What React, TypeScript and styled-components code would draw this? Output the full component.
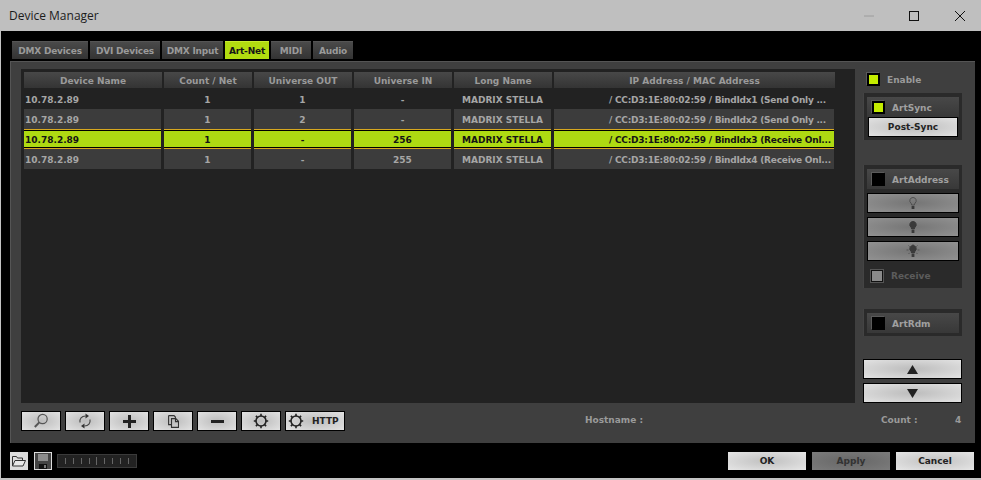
import styled, { createGlobalStyle } from "styled-components";

const GlobalStyle = createGlobalStyle`
  html, body {
    margin: 0;
    padding: 0;
    background: #000;
  }
  * {
    box-sizing: border-box;
  }
`;

const UI_FONT = `"DejaVu Sans", "Liberation Sans", sans-serif`;

const columns = [
  { title: "Device Name", width: 138 },
  { title: "Count / Net", width: 88 },
  { title: "Universe OUT", width: 98 },
  { title: "Universe IN", width: 98 },
  { title: "Long Name", width: 98 },
  { title: "IP Address / MAC Address", width: 281 },
];

const rows = [
  { out: "1", uin: "-", bind: "BindIdx1 (Send Only ..." },
  { out: "2", uin: "-", bind: "BindIdx2 (Send Only ..." },
  { out: "-", uin: "256", bind: "BindIdx3 (Receive Onl..." },
  { out: "-", uin: "255", bind: "BindIdx4 (Receive Onl..." },
];

const tabs = [
  { label: "DMX Devices", width: 76 },
  { label: "DVI Devices", width: 70 },
  { label: "DMX Input", width: 61 },
  { label: "Art-Net", width: 44, active: true },
  { label: "MIDI", width: 40 },
  { label: "Audio", width: 40 },
];

const App = () => {
  return (
    <Window>
      <GlobalStyle />
      <TitleBar>
        <span>Device Manager</span>
        <svg width="101" height="12" viewBox="0 0 101 12">
          <path d="M0 6h10" stroke="#9c9c9c" fill="none" />
          <rect x="45.5" y="1.5" width="9" height="9" stroke="#111" fill="none" />
          <path d="M91 1l10 10M101 1L91 11" stroke="#111" fill="none" />
        </svg>
      </TitleBar>
      <Body>
        <TabRow>
          {tabs.map((tab) => (
            <Tab key={tab.label} $active={tab.active} $width={tab.width}>
              {tab.label}
            </Tab>
          ))}
        </TabRow>
        <Panel>
          <MainArea>
            <Well>
              <HeaderRow>
                {columns.map((col) => (
                  <HeaderCell key={col.title}>{col.title}</HeaderCell>
                ))}
              </HeaderRow>
              {rows.map((row, i) => (
                <TableRow key={row.bind}>
                  <Cell $selected={i === 2} $shaded={i !== 0} $align="left">
                    10.78.2.89
                  </Cell>
                  <Cell $selected={i === 2} $shaded={i !== 0}>1</Cell>
                  <Cell $selected={i === 2} $shaded={i !== 0}>{row.out}</Cell>
                  <Cell $selected={i === 2} $shaded={i !== 0}>{row.uin}</Cell>
                  <Cell $selected={i === 2} $shaded={i !== 0}>MADRIX STELLA</Cell>
                  <Cell $selected={i === 2} $shaded={i !== 0} $align="address">
                    / CC:D3:1E:80:02:59 / {row.bind}
                  </Cell>
                </TableRow>
              ))}
            </Well>
            <SidePanel>
              <EnableRow>
                <CheckBox $on />
                <EnableLabel>Enable</EnableLabel>
              </EnableRow>
              <Group>
                <GroupHead>
                  <CheckBox $on />
                  <GroupLabel>ArtSync</GroupLabel>
                </GroupHead>
                <PostSync>Post-Sync</PostSync>
              </Group>
              <Group $gap={25}>
                <GroupHead>
                  <CheckBox />
                  <GroupLabel>ArtAddress</GroupLabel>
                </GroupHead>
                <BulbButton>
                  <BulbIcon variant="outline" />
                </BulbButton>
                <BulbButton>
                  <BulbIcon variant="solid" />
                </BulbButton>
                <BulbButton>
                  <BulbIcon variant="rays" />
                </BulbButton>
                <ReceiveRow>
                  <ReceiveBox />
                  <ReceiveLabel>Receive</ReceiveLabel>
                </ReceiveRow>
              </Group>
              <Group $gap={21}>
                <GroupHead>
                  <CheckBox />
                  <GroupLabel>ArtRdm</GroupLabel>
                </GroupHead>
              </Group>
              <ArrowStack>
                <ArrowButton>
                  <svg width="11" height="9" viewBox="0 0 11 9">
                    <path d="M5.5 0L11 9H0z" fill="#222" />
                  </svg>
                </ArrowButton>
                <ArrowButton>
                  <svg width="11" height="9" viewBox="0 0 11 9">
                    <path d="M0 0h11L5.5 9z" fill="#222" />
                  </svg>
                </ArrowButton>
              </ArrowStack>
            </SidePanel>
          </MainArea>
          <BottomBar>
            <ToolBar>
              <ToolButton>
                <svg width="16" height="16" viewBox="0 0 16 16" fill="none" stroke="#555" strokeWidth="1.2">
                  <circle cx="9.6" cy="6" r="4.6" />
                  <path d="M6.300 9.400L1.800 14" strokeWidth="2" />
                </svg>
              </ToolButton>
              <ToolButton>
                <svg width="14" height="16" viewBox="0 0 14 16" fill="none" stroke="#444" strokeWidth="1.1">
                  <path d="M2 9.500C1.400 6 3.500 3 7.500 3" />
                  <path d="M12 6.500C12.600 10 10.500 13 6.500 13" />
                  <path d="M7.500 .5l3.500 2.500-3.500 2.500z" fill="#333" stroke="none" />
                  <path d="M6.500 10.500L3 13l3.500 2.500z" fill="#333" stroke="none" />
                </svg>
              </ToolButton>
              <ToolButton>
                <svg width="13" height="13" viewBox="0 0 13 13">
                  <path d="M5 0h3v5h5v3H8v5H5V8H0V5h5z" fill="#222" />
                </svg>
              </ToolButton>
              <ToolButton>
                <svg width="11" height="13" viewBox="0 0 11 13" fill="none" stroke="#333" strokeWidth="1.1">
                  <path d="M.6.6h5.400l1.400 1.400v2" />
                  <path d="M.6.6v9h2.400" />
                  <path d="M3.500 3.600h4.300l2.700 2.700v6.100h-7z" />
                  <path d="M7.500 3.600v3h3" />
                </svg>
              </ToolButton>
              <ToolButton>
                <svg width="13" height="3" viewBox="0 0 13 3">
                  <rect width="13" height="3" fill="#222" />
                </svg>
              </ToolButton>
              <ToolButton>
                <GearIcon />
              </ToolButton>
              <ToolButton $wide>
                <GearIcon />
                <HttpLabel>HTTP</HttpLabel>
              </ToolButton>
            </ToolBar>
            <Hostname>Hostname :</Hostname>
            <CountLabel>Count :</CountLabel>
            <CountValue>4</CountValue>
          </BottomBar>
        </Panel>
        <Footer>
          <FileButton>
            <svg width="14" height="12" viewBox="0 0 14 12" fill="none" stroke="#333" strokeWidth="1">
              <path d="M.5 11V1.500h4l1 1.500h5v2" />
              <path d="M.5 11l2.500-5.500h10.500L11 11z" fill="#e8e8e8" />
            </svg>
          </FileButton>
          <FileButton>
            <svg width="16" height="16" viewBox="0 0 16 16">
              <rect width="16" height="16" fill="#444" />
              <rect x="3" y="1" width="10" height="7" fill="#8c8c8c" />
              <rect x="4" y="11" width="8" height="5" fill="#111" />
              <rect x="9" y="12" width="2" height="3" fill="#777" />
            </svg>
          </FileButton>
          <Slider>
            {Array.from({ length: 9 }).map((_, i) => (
              <Tick key={i} $tall={i === 4} />
            ))}
          </Slider>
          <DialogButtons>
            <DialogButton>OK</DialogButton>
            <DialogButton $disabled>Apply</DialogButton>
            <DialogButton>Cancel</DialogButton>
          </DialogButtons>
        </Footer>
      </Body>
    </Window>
  );
};

const GearIcon = () => (
  <svg width="16" height="16" viewBox="0 0 16 16" fill="none">
    <circle cx="8" cy="8" r="5" stroke="#222" strokeWidth="1.6" />
    <path
      d="M8 .8v2.400M8 12.800v2.400M.8 8h2.400M12.800 8h2.400M2.900 2.900l1.700 1.700M11.400 11.400l1.700 1.700M13.100 2.900l-1.700 1.700M4.600 11.400l-1.700 1.700"
      stroke="#222"
      strokeWidth="1.600"
    />
  </svg>
);

const BulbIcon = ({ variant }: { variant: "outline" | "solid" | "rays" }) => (
  <svg width="16" height="14" viewBox="0 0 16 14" fill="none">
    {variant === "rays" && (
      <path
        d="M8 0v1.500M3.500 1.500l1.200 1.200M12.500 1.500l-1.200 1.200M1.500 6h2M12.500 6h2M3.500 10l1.200-1.200M12.500 10l-1.200-1.200"
        stroke="#555"
        strokeWidth="1"
      />
    )}
    <path
      d="M8 1.500a3.200 3.200 0 0 0-2 5.700c.5.500.6 1 .6 1.800h2.800c0-.8.100-1.300.6-1.800a3.200 3.200 0 0 0-2-5.700z"
      fill={variant === "outline" ? "none" : "#3a3a3a"}
      stroke={variant === "outline" ? "#505050" : "#3a3a3a"}
    />
    <rect x="6.600" y="10" width="2.800" height="3" fill="#3a3a3a" />
  </svg>
);

const Window = styled.div`
  width: 981px;
  height: 480px;
  display: flex;
  flex-direction: column;
  overflow: hidden;
  background: #c4c4c4;
  font-family: ${UI_FONT};
  font-size: 9px;
  font-weight: 700;
`;

const TitleBar = styled.div`
  height: 31px;
  flex: none;
  display: flex;
  align-items: center;
  justify-content: space-between;
  padding: 0 16px 0 9px;
  background: #bfbfbf;
  color: #1c1c1c;
  font-family: "Open Sans", "Noto Sans", sans-serif;
  font-size: 12px;
  font-weight: 400;
`;

const Body = styled.div`
  height: 447px;
  flex: none;
  margin-left: 1px;
  background: #000;
  display: flex;
  flex-direction: column;
  padding: 10px 7px 0 9px;
`;

const TabRow = styled.div`
  display: flex;
  height: 18px;
  gap: 2px;
  padding-left: 2px;
  margin-bottom: 2px;
`;

const Tab = styled.div<{ $active?: boolean; $width: number }>`
  width: ${(p) => p.$width}px;
  display: flex;
  align-items: center;
  justify-content: center;
  padding-top: 1px;
  letter-spacing: -0.2px;
  color: ${(p) => (p.$active ? "#161616" : "#9a9a9a")};
  background: ${(p) =>
    p.$active ? "#b2dc10" : "linear-gradient(#4a4a4a, #333333)"};
  border-top: 1px solid ${(p) => (p.$active ? "#c8ec30" : "#555555")};
`;

const Panel = styled.div`
  height: 382px;
  width: 965px;
  background: #3f3f3f;
  border-top: 1px solid #555;
  border-left: 1px solid #555;
  padding: 7px 13px 0 10px;
  display: flex;
  flex-direction: column;
`;

const MainArea = styled.div`
  height: 334px;
  display: flex;
  gap: 8px;
`;

const Well = styled.div`
  width: 834px;
  background: #222222;
  padding: 3px 0 0 3px;
`;

const TableRow = styled.div`
  display: grid;
  grid-template-columns: 138px 88px 98px 98px 98px 281px;
  column-gap: 2px;
  height: 20px;
`;

const HeaderRow = styled(TableRow)`
  height: 17px;
`;

const HeaderCell = styled.div`
  height: 16px;
  padding-top: 1px;
  display: flex;
  align-items: center;
  justify-content: center;
  color: #9a9a9a;
  background: linear-gradient(#484848, #343434);
`;

const Cell = styled.div<{
  $selected?: boolean;
  $shaded?: boolean;
  $align?: "left" | "address";
}>`
  height: 20px;
  margin-right: 1px;
  padding-top: 1px;
  display: flex;
  align-items: center;
  justify-content: ${(p) => (p.$align ? "flex-start" : "center")};
  padding-left: ${(p) =>
    p.$align === "address" ? "55px" : p.$align === "left" ? "1px" : "0"};
  letter-spacing: ${(p) => (p.$align === "address" ? "-0.24px" : "0")};
  white-space: nowrap;
  color: ${(p) => (p.$selected ? "#141414" : "#a6a6a6")};
  background: ${(p) =>
    p.$selected ? "#aeda12" : p.$shaded ? "#3c3c3c" : "#222222"};
  ${(p) =>
    p.$selected
      ? "box-shadow: inset 0 1px 0 #d8a820, inset 0 2px 0 #000, inset 0 -1px 0 #d8a820, inset 0 -2px 0 #000;"
      : ""}
`;

const SidePanel = styled.div`
  width: 99px;
  display: flex;
  flex-direction: column;
`;

const EnableRow = styled.div`
  height: 13px;
  margin: 4px 0 7px;
  display: flex;
  align-items: center;
  padding-left: 4px;
  gap: 7px;
`;

const EnableLabel = styled.span`
  color: #9a9a9a;
`;

const CheckBox = styled.div<{ $on?: boolean }>`
  width: 13px;
  height: 13px;
  flex: none;
  background: ${(p) => (p.$on ? "#c4ec00" : "#000")};
  border: 2px solid #000;
  box-shadow: -1px -1px 0 #5a5a5a;
`;

const Group = styled.div<{ $gap?: number }>`
  margin-top: ${(p) => p.$gap ?? 0}px;
  background: #2a2a2a;
  border-left: 1px solid #444;
  padding: 4px 3px 3px 3px;
  display: flex;
  flex-direction: column;
`;

const GroupHead = styled.div`
  height: 20px;
  padding: 1px 0 0 5px;
  background: linear-gradient(#484848, #383838);
  display: flex;
  align-items: center;
  gap: 7px;
`;

const GroupLabel = styled.span`
  color: #a0a0a0;
`;

const silverButton = `
  background: radial-gradient(ellipse at center, #bcbcbc, #e2e2e2);
  color: #222;
`;

const PostSync = styled.div`
  height: 20px;
  display: flex;
  align-items: center;
  justify-content: center;
  margin: 0 1px;
  border: 1px solid #000;
  ${silverButton}
`;

const BulbButton = styled.div`
  height: 20px;
  margin-top: 4px;
  display: flex;
  align-items: center;
  justify-content: center;
  border: 1px solid #000;
  background: radial-gradient(ellipse at center, #757575, #929292);
`;

const ReceiveRow = styled.div`
  height: 24px;
  padding: 5px 0 0 3px;
  display: flex;
  align-items: center;
  gap: 7px;
`;

const ReceiveBox = styled.div`
  width: 14px;
  height: 14px;
  border: 2px solid #111;
  outline: 1px solid #555;
  outline-offset: -1px;
  background: #8a8a8a;
`;

const ReceiveLabel = styled.span`
  color: #5c5c5c;
`;

const ArrowStack = styled.div`
  margin-top: auto;
  display: flex;
  flex-direction: column;
  gap: 4px;
`;

const ArrowButton = styled.div`
  height: 20px;
  display: flex;
  align-items: center;
  justify-content: center;
  border: 1px solid #000;
  ${silverButton}
`;

const BottomBar = styled.div`
  height: 20px;
  margin-top: 8px;
  display: flex;
  align-items: center;
  color: #9a9a9a;
  line-height: 19px;
`;

const ToolBar = styled.div`
  width: 564px;
  display: flex;
  gap: 4px;
`;

const ToolButton = styled.div<{ $wide?: boolean }>`
  width: ${(p) => (p.$wide ? 60 : 40)}px;
  height: 20px;
  display: flex;
  align-items: center;
  justify-content: ${(p) => (p.$wide ? "flex-start" : "center")};
  padding-left: ${(p) => (p.$wide ? 2 : 0)}px;
  border: 1px solid #000;
  ${silverButton}
`;

const HttpLabel = styled.span`
  margin-left: 8px;
  color: #222;
`;

const Hostname = styled.span`
  width: 296px;
  align-self: flex-start;
`;

const CountLabel = styled.span`
  width: 74px;
  align-self: flex-start;
`;

const CountValue = styled.span`
  align-self: flex-start;
`;

const Footer = styled.div`
  flex: 1;
  display: flex;
  align-items: flex-start;
  padding-top: 9px;
`;

const FileButton = styled.div`
  width: 18px;
  height: 18px;
  margin-right: 6px;
  display: flex;
  align-items: center;
  justify-content: center;
  background: #dcdcdc;
`;

const Slider = styled.div`
  width: 80px;
  height: 14px;
  margin: 2px 0 0 -1px;
  background: #222;
  border: 1px solid #3a3a3a;
  display: flex;
  align-items: center;
  justify-content: space-evenly;
`;

const Tick = styled.div<{ $tall?: boolean }>`
  width: 1px;
  height: ${(p) => (p.$tall ? 8 : 6)}px;
  background: #666;
`;

const DialogButtons = styled.div`
  margin-left: auto;
  display: flex;
  gap: 6px;
`;

const DialogButton = styled.div<{ $disabled?: boolean }>`
  width: 78px;
  height: 18px;
  display: flex;
  align-items: center;
  justify-content: center;
  ${(p) =>
    p.$disabled
      ? "background: radial-gradient(ellipse at center, #666, #7c7c7c); color: #333;"
      : "background: radial-gradient(ellipse at center, #c0c0c0, #e6e6e6); color: #222;"}
`;

export default App;
